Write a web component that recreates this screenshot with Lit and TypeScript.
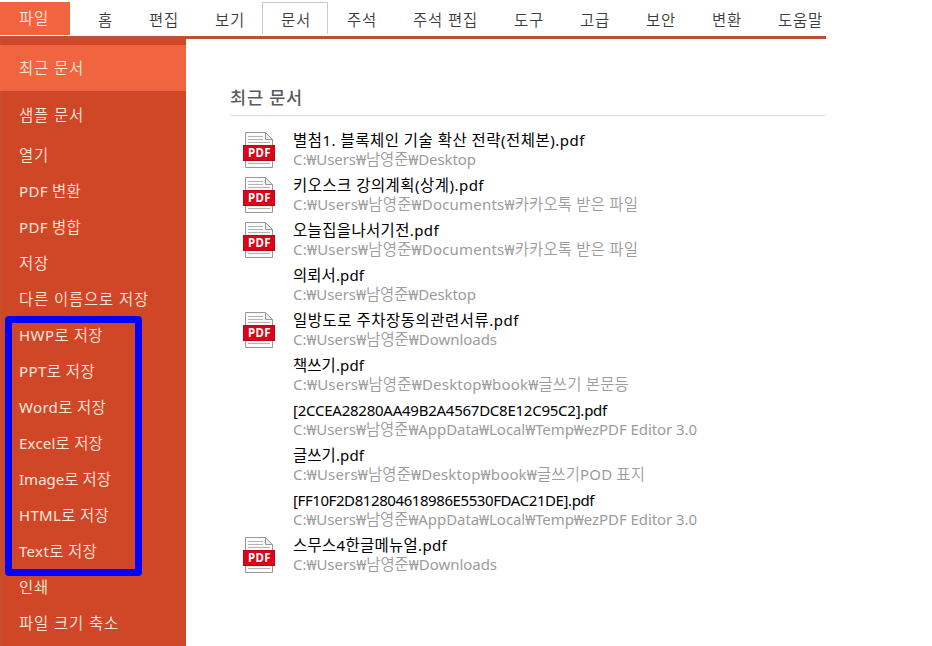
import { LitElement, html, css, svg } from "lit";
import { customElement, property } from "lit/decorators.js";

/**
 * A single line of text whose tracking is adjusted so that it fills `width` pixels.
 * Hangul runs are set slightly larger than the Latin ones.
 */
@customElement("fit-text")
class FitText extends LitElement {
  @property() text = "";
  @property({ type: Number }) width = 0;

  static styles = css`
    :host { display: block; white-space: pre; }
    .t { display: inline-block; line-height: inherit; }
    .ko { font-size: 1.03em; line-height: 1; font-weight: var(--ko-weight, inherit); }
  `;

  updated() {
    const el = this.renderRoot.querySelector(".t") as HTMLElement;
    el.style.letterSpacing = "0px";
    const natural = el.getBoundingClientRect().width;
    const n = [...this.text].length;
    el.style.letterSpacing = `${(this.width - natural) / n}px`;
  }

  render() {
    const runs = this.text.split(/([가-힣]+)/).filter(Boolean);
    return html`<span class="t">${runs.map(r => /[가-힣]/.test(r) ? html`<span class="ko">${r}</span>` : r)}</span>`;
  }
}

/** label, cell width, text width */
const TABS: [string, number, number][] = [
  ["홈", 51, 15], ["편집", 66, 30], ["보기", 66, 30], ["문서", 66, 30],
  ["주석", 66, 30], ["주석 편집", 101, 65], ["도구", 66, 30], ["고급", 66, 30],
  ["보안", 66, 30], ["변환", 66, 30], ["도움말", 80, 45],
];

const MENU: [string, number][] = [
  ["최근 문서", 65], ["샘플 문서", 65], ["열기", 30], ["PDF 변환", 62],
  ["PDF 병합", 62], ["저장", 30], ["다른 이름으로 저장", 130], ["HWP로 저장", 84],
  ["PPT로 저장", 76], ["Word로 저장", 87], ["Excel로 저장", 84], ["Image로 저장", 92],
  ["HTML로 저장", 90], ["Text로 저장", 78], ["인쇄", 30], ["파일 크기 축소", 100],
];

interface Doc { name: string; nw: number; path: string; pw: number; icon: boolean; }
const U = "C:₩Users₩남영준₩";
const DOCS: Doc[] = [
  { name: "별첨1. 블록체인 기술 확산 전략(전체본).pdf", nw: 292, path: U + "Desktop", pw: 183, icon: true },
  { name: "키오스크 강의계획(상계).pdf", nw: 191, path: U + "Documents₩카카오톡 받은 파일", pw: 345, icon: true },
  { name: "오늘집을나서기전.pdf", nw: 146, path: U + "Documents₩카카오톡 받은 파일", pw: 345, icon: true },
  { name: "의뢰서.pdf", nw: 71, path: U + "Desktop", pw: 183, icon: false },
  { name: "일방도로 주차장동의관련서류.pdf", nw: 226, path: U + "Downloads", pw: 204, icon: true },
  { name: "책쓰기.pdf", nw: 71, path: U + "Desktop₩book₩글쓰기 본문등", pw: 336, icon: false },
  { name: "[2CCEA28280AA49B2A4567DC8E12C95C2].pdf", nw: 314, path: U + "AppData₩Local₩Temp₩ezPDF Editor 3.0", pw: 404, icon: false },
  { name: "글쓰기.pdf", nw: 71, path: U + "Desktop₩book₩글쓰기POD 표지", pw: 352, icon: false },
  { name: "[FF10F2D812804618986E5530FDAC21DE].pdf", nw: 301, path: U + "AppData₩Local₩Temp₩ezPDF Editor 3.0", pw: 404, icon: false },
  { name: "스무스4한글메뉴얼.pdf", nw: 154, path: U + "Downloads", pw: 204, icon: true },
];

const pdfIcon = html`<svg class="pdf" width="32" height="36" viewBox="0 0 32 36">
  ${svg`
    <path d="M2.5 .5H22.5L29.5 7.5V35.5H2.5Z" fill="#fafafa" stroke="#989898"/>
    <path d="M22.5 .5V7.5H29.5Z" fill="#ececec" stroke="#989898"/>
    <path d="M5 4.5H20M5 7.5H20M5 10.5H27M5 31.5H27" stroke="#b4b4b4"/>
    <rect x=".5" y="13.5" width="31" height="15" fill="#dc0518" stroke="#b8071a"/>
    <text x="5" y="25" class="lbl" textLength="22.5">PDF</text>
  `}
</svg>`;

@customElement("app-root")
class AppRoot extends LitElement {
  static styles = css`
    :host {
      display: block; width: 932px; height: 646px; overflow: hidden; background: #fff;
      font: 15px/20px "Noto Sans", "Noto Sans CJK KR", sans-serif;
      position: relative;
    }
    * { box-sizing: border-box; }
    .top { display: flex; width: 826px; height: 39px; padding-top: 2px; border-bottom: 3px solid #bd4f37; overflow: hidden; --ko-weight: 350; }
    .file { width: 70px; height: 33px; margin-right: 9px; padding: 6px 0 0 19px; background: #f0643f; color: #ffe9dc; flex: none; }
    .tab { flex: none; height: 32px; padding: 7px 0 0 18px; color: #3c3c3c; border: 1px solid transparent; border-width: 1px 1px 0; }
    .on { border-color: #cbcbcb; }
    .w51 { width: 51px; } .w66 { width: 66px; } .w80 { width: 80px; } .w101 { width: 101px; }
    .body { display: flex; height: 607px; }
    .side { width: 186px; padding-top: 6px; background: #d04727; color: #ffe6dc; border-left: 1px solid #bb5239; flex: none; --ko-weight: 350; }
    .item { display: flex; align-items: center; height: 36px; padding-left: 18px; }
    .item.big { height: 46px; }
    .item.sel { background: #f0643f; margin-left: -1px; padding-left: 19px; }
    .item.second { padding-top: 2px; }
    .main { width: 640px; padding: 48px 0 0 44px; }
    h1 { margin: 0; height: 29px; width: 596px; border-bottom: 1px solid #dcdcdc; color: #5a5a5a; font-size: 17px; font-weight: 500; line-height: 22px; }
    .list { padding-top: 15px; }
    .doc { display: flex; height: 45px; padding-left: 13px; }
    .ico { width: 50px; padding-top: 1px; flex: none; }
    .pdf { display: block; }
    .lbl { font: 700 11.5px "Noto Sans", sans-serif; fill: #fff; }
    .name { color: #000; height: 19px; line-height: 18px; }
    .path { color: #9c9c9c; line-height: 18px; --ko-weight: 350; }
    .mark { position: absolute; left: 5px; top: 316px; width: 137px; height: 260px; border: 7px solid #0000fe; border-radius: 4px; }
  `;

  render() {
    return html`
      <div class="top">
        <div class="file"><fit-text text="파일" width="30"></fit-text></div>
        ${TABS.map(([t, w, tw]) => html`<div class="tab w${w} ${t === "문서" ? "on" : ""}"><fit-text .text=${t} .width=${tw}></fit-text></div>`)}
      </div>
      <div class="body">
        <nav class="side">
          ${MENU.map(([t, w], i) => html`<div class="item ${i < 2 ? "big" : ""} ${i === 0 ? "sel" : i === 1 ? "second" : ""}"><fit-text .text=${t} .width=${w}></fit-text></div>`)}
        </nav>
        <main class="main">
          <h1><fit-text text="최근 문서" width="73"></fit-text></h1>
          <div class="list">
            ${DOCS.map(d => html`<div class="doc">
              <div class="ico">${d.icon ? pdfIcon : ""}</div>
              <div>
                <fit-text class="name" .text=${d.name} .width=${d.nw}></fit-text>
                <fit-text class="path" .text=${d.path} .width=${d.pw}></fit-text>
              </div>
            </div>`)}
          </div>
        </main>
      </div>
      <div class="mark"></div>
    `;
  }
}
